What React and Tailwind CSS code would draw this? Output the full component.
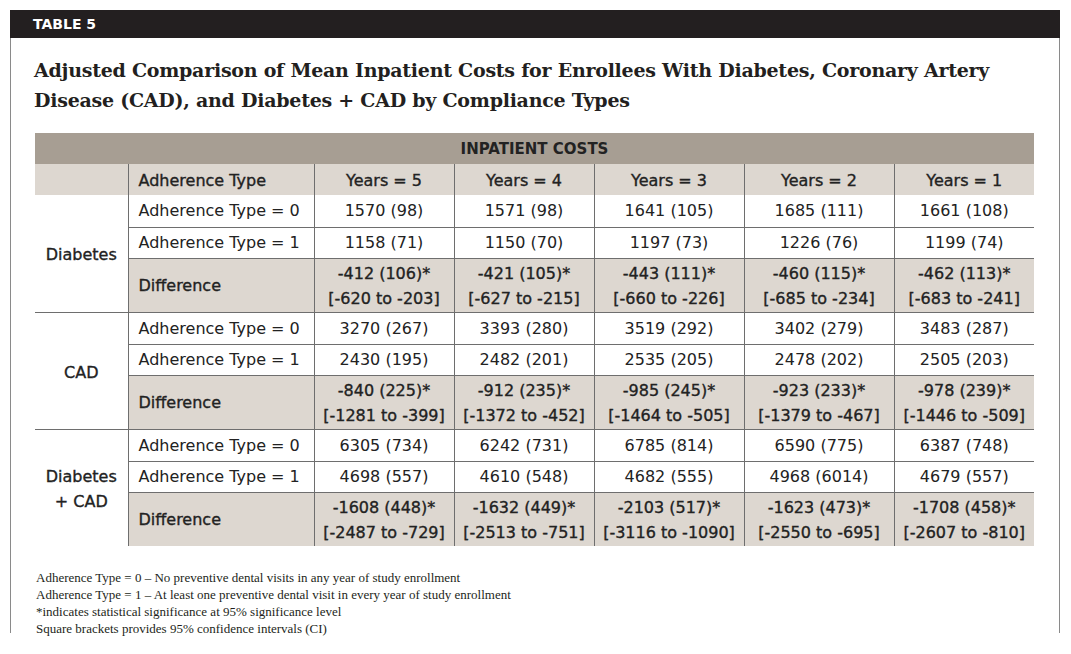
import React from "react";

const groups = [
  {
    label: ["Diabetes"],
    r0: ["1570 (98)", "1571 (98)", "1641 (105)", "1685 (111)", "1661 (108)"],
    r1: ["1158 (71)", "1150 (70)", "1197 (73)", "1226 (76)", "1199 (74)"],
    d: [
      ["-412 (106)*", "[-620 to -203]"],
      ["-421 (105)*", "[-627 to -215]"],
      ["-443 (111)*", "[-660 to -226]"],
      ["-460 (115)*", "[-685 to -234]"],
      ["-462 (113)*", "[-683 to -241]"],
    ],
  },
  {
    label: ["CAD"],
    r0: ["3270 (267)", "3393 (280)", "3519 (292)", "3402 (279)", "3483 (287)"],
    r1: ["2430 (195)", "2482 (201)", "2535 (205)", "2478 (202)", "2505 (203)"],
    d: [
      ["-840 (225)*", "[-1281 to -399]"],
      ["-912 (235)*", "[-1372 to -452]"],
      ["-985 (245)*", "[-1464 to -505]"],
      ["-923 (233)*", "[-1379 to -467]"],
      ["-978 (239)*", "[-1446 to -509]"],
    ],
  },
  {
    label: ["Diabetes", "+ CAD"],
    r0: ["6305 (734)", "6242 (731)", "6785 (814)", "6590 (775)", "6387 (748)"],
    r1: ["4698 (557)", "4610 (548)", "4682 (555)", "4968 (6014)", "4679 (557)"],
    d: [
      ["-1608 (448)*", "[-2487 to -729]"],
      ["-1632 (449)*", "[-2513 to -751]"],
      ["-2103 (517)*", "[-3116 to -1090]"],
      ["-1623 (473)*", "[-2550 to -695]"],
      ["-1708 (458)*", "[-2607 to -810]"],
    ],
  },
];

const years = ["Years = 5", "Years = 4", "Years = 3", "Years = 2", "Years = 1"];
const sans = "font-['DejaVu_Sans',sans-serif]";
const med = "[-webkit-text-stroke:0.35px_#222]";

export default function App() {
  return (
    <div className="bg-white w-[1071px] h-[654px] pt-[10px] pl-[10px] text-[#222]">
      <div className="w-[1050px]">
        <div className={`h-[28px] bg-[#231f20] text-white ${sans} font-bold text-[14px] leading-[29px] pl-[23px]`}>
          TABLE 5
        </div>
        <div className="h-[595px] border-l border-r border-[#8a8a8a] pl-[24px] pt-[17px]">
          <h1 className="font-['DejaVu_Serif',serif] font-bold text-[19px] leading-[30px] text-[#231f20] tracking-[-0.25px] -ml-[1px]">
            Adjusted Comparison of Mean Inpatient Costs for Enrollees With Diabetes, Coronary Artery
            <br />
            Disease (CAD), and Diabetes + CAD by Compliance Types
          </h1>
          <table className={`mt-[18px] w-[999px] border-collapse table-fixed ${sans} text-[16px] text-[#222]`}>
            <colgroup>
              <col className="w-[93px]" />
              <col className="w-[186px]" />
              <col className="w-[140px]" />
              <col className="w-[140px]" />
              <col className="w-[150px]" />
              <col className="w-[150px]" />
              <col className="w-[140px]" />
            </colgroup>
            <tbody>
              <tr className="h-[29px] bg-[#a79e93]">
                <td colSpan={7} className="text-center font-bold text-[15px] leading-[29px] pt-[2px] pb-0">
                  INPATIENT COSTS
                </td>
              </tr>
              <tr className="h-[31px] bg-[#ddd7d0]">
                <td className="p-0 border-r border-[#6e6e6e]"></td>
                <td className={`pl-[10px] pt-[3px] pb-0 border-r border-[#6e6e6e] ${med}`}>Adherence Type</td>
                {years.map((y, i) => (
                  <td key={y} className={`text-center pt-[3px] pb-0 ${i < 4 ? "border-r border-[#6e6e6e]" : ""} ${med}`}>
                    {y}
                  </td>
                ))}
              </tr>
              {groups.map((g, gi) => (
                <React.Fragment key={gi}>
                  <tr className={`h-[32px] ${gi > 0 ? "border-t border-[#6e6e6e]" : ""}`}>
                    <td rowSpan={3} className={`text-center align-middle pt-[3px] pb-0 px-0 leading-[25px] border-r border-[#6e6e6e] ${med}`}>
                      {g.label.map((l) => (
                        <div key={l}>{l}</div>
                      ))}
                    </td>
                    <td className="pl-[10px] pt-[1px] pb-0 border-r border-[#6e6e6e]">Adherence Type = 0</td>
                    {g.r0.map((v, i) => (
                      <td key={i} className={`text-center pt-[1px] pb-0 ${i < 4 ? "border-r border-[#6e6e6e]" : ""}`}>
                        {v}
                      </td>
                    ))}
                  </tr>
                  <tr className="h-[31px] border-t border-[#6e6e6e]">
                    <td className="pl-[10px] pt-[1px] pb-0 border-r border-[#6e6e6e]">Adherence Type = 1</td>
                    {g.r1.map((v, i) => (
                      <td key={i} className={`text-center pt-[1px] pb-0 ${i < 4 ? "border-r border-[#6e6e6e]" : ""}`}>
                        {v}
                      </td>
                    ))}
                  </tr>
                  <tr className="h-[54px] border-t border-[#6e6e6e] bg-[#ddd7d0]">
                    <td className={`pl-[10px] pt-[2px] pb-0 border-r border-[#6e6e6e] ${med}`}>Difference</td>
                    {g.d.map((v, i) => (
                      <td key={i} className={`text-center pt-[1px] pb-0 leading-[25px] ${i < 4 ? "border-r border-[#6e6e6e]" : ""} ${med}`}>
                        <div>{v[0]}</div>
                        <div>{v[1]}</div>
                      </td>
                    ))}
                  </tr>
                </React.Fragment>
              ))}
            </tbody>
          </table>
          <div className="mt-[23px] font-['Liberation_Serif',serif] text-[13px] leading-[17px] text-[#231f20] pl-[1px]">
            <div>Adherence Type = 0 – No preventive dental visits in any year of study enrollment</div>
            <div>Adherence Type = 1 – At least one preventive dental visit in every year of study enrollment</div>
            <div>*indicates statistical significance at 95% significance level</div>
            <div>Square brackets provides 95% confidence intervals (CI)</div>
          </div>
        </div>
      </div>
    </div>
  );
}
